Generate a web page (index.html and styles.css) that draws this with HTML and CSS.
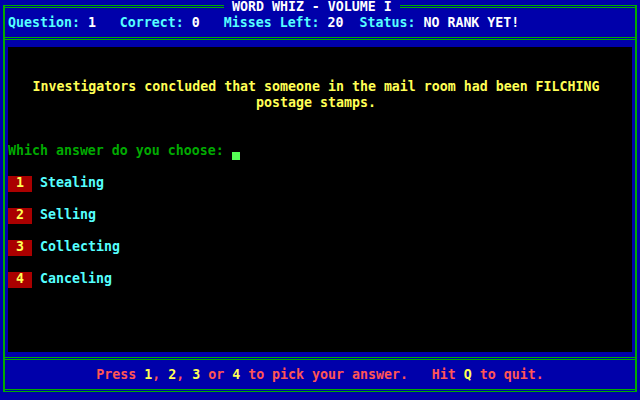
FILE: index.html
```html
<!DOCTYPE html>
<html lang="en">
<head>
<meta charset="utf-8">
<title>Word Whiz - Volume I</title>
<link rel="stylesheet" href="styles.css">
</head>
<body>
<div class="screen">
  <div class="frame">
    <div class="titlebar">
      <div class="rule rule-left"></div>
      <div class="title"> WORD WHIZ - VOLUME I </div>
      <div class="rule rule-right"></div>
    </div>
    <div class="frame-body">
      <div class="row stats"><span class="label">Question:</span> <span class="value">1</span>   <span class="label">Correct:</span> <span class="value">0</span>   <span class="label">Misses Left:</span> <span class="value">20</span>  <span class="label">Status:</span> <span class="value">NO RANK YET!</span></div>
      <div class="divider"></div>
      <div class="panel">
        <p class="question">Investigators concluded that someone in the mail room had been FILCHING<br>postage stamps.</p>
        <div class="row prompt"><span>Which answer do you choose: </span><span class="cursor"></span></div>
        <ol class="options">
          <li class="row option"><span class="key">1</span><span class="choice">Stealing</span></li>
          <li class="row option"><span class="key">2</span><span class="choice">Selling</span></li>
          <li class="row option"><span class="key">3</span><span class="choice">Collecting</span></li>
          <li class="row option"><span class="key">4</span><span class="choice">Canceling</span></li>
        </ol>
      </div>
      <div class="divider"></div>
      <div class="row footer">Press <span class="hot">1</span>, <span class="hot">2</span>, <span class="hot">3</span> or <span class="hot">4</span> to pick your answer.   Hit <span class="hot">Q</span> to quit.</div>
      <div class="divider divider-bottom"></div>
    </div>
  </div>
</div>
</body>
</html>
```
FILE: styles.css
```css
* {
  box-sizing: border-box;
  margin: 0;
  padding: 0;
}

body {
  margin: 0;
  background: #0000aa;
  font-family: "DejaVu Sans Mono", "Liberation Mono", monospace;
  font-weight: bold;
  font-size: 13.288px;
}

.screen {
  width: 640px;
  height: 400px;
  padding: 0 3px;
  background: #0000aa;
  overflow: hidden;
}

.frame {
  width: 634px;
}

.titlebar {
  display: flex;
  height: 16px;
}

.rule {
  margin-top: 5px;
  height: 11px;
  border-top: 1px solid #00aa00;
  background: linear-gradient(#00aa00, #00aa00) 0 1px / 100% 1px no-repeat;
}

.rule-left {
  width: 221px;
  border-left: 2px solid #00aa00;
}

.rule-right {
  flex: 1;
  border-right: 2px solid #00aa00;
}

.title {
  width: 176px;
  height: 16px;
  line-height: 14px;
  white-space: pre;
  color: #ffffff;
}

.frame-body {
  border-left: 2px solid #00aa00;
  border-right: 2px solid #00aa00;
}

.row {
  height: 16px;
  line-height: 14px;
  white-space: pre;
}

.stats {
  padding-left: 3px;
}

.label {
  color: #55ffff;
}

.value {
  color: #ffffff;
}

.divider {
  margin-top: 5px;
  height: 3px;
  border-top: 1px solid #00aa00;
  border-bottom: 1px solid #00aa00;
}

.panel {
  margin: 7px 3px 0;
  height: 305px;
  background: #000000;
  padding-top: 32px;
}

.question {
  width: 616px;
  text-align: center;
  color: #ffff55;
  line-height: 16px;
}

.prompt {
  margin-top: 33px;
  display: flex;
  color: #00aa00;
}

.cursor {
  width: 8px;
  height: 8px;
  margin-top: 8px;
  background: #55ff55;
}

.options {
  list-style: none;
  margin-top: 16px;
  display: flex;
  flex-direction: column;
  gap: 16px;
}

.option {
  display: flex;
  gap: 8px;
}

.key {
  width: 24px;
  height: 16px;
  background: #aa0000;
  color: #ffff55;
  text-align: center;
}

.choice {
  color: #55ffff;
}

.footer {
  margin-top: 8px;
  text-align: center;
  color: #ff5555;
}

.hot {
  color: #ffff55;
}
```
